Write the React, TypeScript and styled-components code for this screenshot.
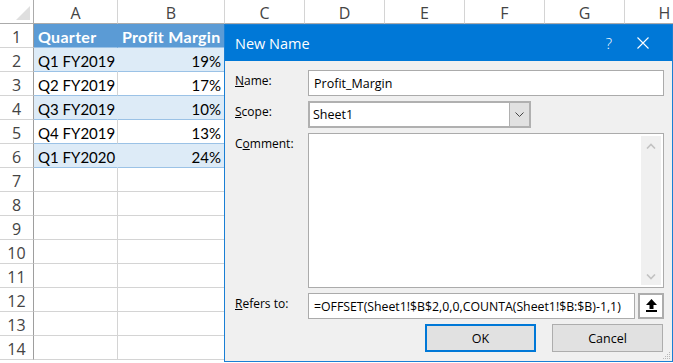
import React from 'react';
import styled, { createGlobalStyle } from 'styled-components';

const GlobalStyle = createGlobalStyle`
    html, body {
        margin: 0;
        padding: 0;
        background: #fff;
    }
    body {
        overflow: hidden;
    }
`;

const Screen = styled.div`
    position: relative;
    width: 673px;
    height: 363px;
    overflow: hidden;
    background: #fff;
`;

// ---- worksheet ----

const Sheet = styled.div`
    display: grid;
    grid-template-columns: 34px 84px 107px repeat(6, 80px);
    grid-auto-rows: 24px;
`;

const Corner = styled.div`
    display: flex;
    align-items: flex-end;
    justify-content: flex-end;
    padding: 0 3px 3px 0;
    box-sizing: border-box;
    border-right: 1px solid #ababab;
    border-bottom: 1px solid #ababab;
`;

const ColHead = styled.div`
    display: flex;
    align-items: center;
    justify-content: center;
    padding-top: 3px;
    box-sizing: border-box;
    border-right: 1px solid #d4d4d4;
    border-bottom: 1px solid #ababab;
    font: 16px 'Open Sans', sans-serif;
    color: #444;
`;

const RowHead = styled.div`
    display: flex;
    align-items: center;
    justify-content: center;
    padding-top: 3px;
    box-sizing: border-box;
    border-right: 1px solid #9e9e9e;
    border-bottom: 1px solid #d4d4d4;
    font: 16px 'Open Sans', sans-serif;
    color: #444;
`;

type Kind = 'head' | 'band' | 'plain' | 'empty';

const fills: Record<Kind, { bg: string; right: string; bottom: string }> = {
    head: { bg: '#5b9bd5', right: '#5b9bd5', bottom: '#9bc2e6' },
    band: { bg: '#ddebf7', right: '#ddebf7', bottom: '#9bc2e6' },
    plain: { bg: '#ffffff', right: '#d4d4d4', bottom: '#9bc2e6' },
    empty: { bg: '#ffffff', right: '#d4d4d4', bottom: '#d4d4d4' },
};

const Cell = styled.div<{ $kind: Kind; $right?: boolean }>`
    display: flex;
    align-items: center;
    justify-content: ${p => (p.$right ? 'flex-end' : 'flex-start')};
    padding: 2px 3px 0 4px;
    box-sizing: border-box;
    overflow: hidden;
    white-space: nowrap;
    background: ${p => fills[p.$kind].bg};
    border-right: 1px solid ${p => fills[p.$kind].right};
    border-bottom: 1px solid ${p => fills[p.$kind].bottom};
    font: ${p => (p.$kind === 'head' ? '700 16px' : '400 15px')} Lato, sans-serif;
    letter-spacing: ${p => (p.$kind === 'head' ? '0.3px' : '0')};
    color: ${p => (p.$kind === 'head' ? '#fff' : '#000')};
`;

// ---- dialog ----

const Dialog = styled.div`
    position: absolute;
    left: 224px;
    top: 24px;
    width: 449px;
    height: 338px;
    box-sizing: border-box;
    display: flex;
    flex-direction: column;
    border: 1px solid #1a7fd4;
    background: #f0f0f0;
    font-family: 'Open Sans', sans-serif;
    color: #000;
`;

const TitleBar = styled.div`
    display: flex;
    align-items: center;
    height: 36px;
    padding: 0 12px 0 10px;
    background: #0078d7;
    color: #fff;
`;

const Title = styled.div`
    flex: 1;
    font-size: 14.5px;
`;

const TitleButton = styled.div`
    display: flex;
    align-items: center;
    justify-content: center;
    width: 34px;
    height: 36px;
    font-size: 15px;
    font-weight: 300;
`;

const Form = styled.div`
    display: grid;
    grid-template-columns: 73px 1fr;
    grid-template-rows: 26px 27px 155px 26px 28px;
    row-gap: 5px;
    padding: 9px 8px 0 10px;
`;

const Label = styled.div`
    padding-top: 3px;
    font-size: 12px;
    line-height: 16px;
`;

const TextBox = styled.div`
    display: flex;
    align-items: center;
    min-width: 0;
    padding: 0 5px;
    box-sizing: border-box;
    border: 1px solid #ababab;
    background: #fff;
    font-size: 12.5px;
    white-space: nowrap;
    overflow: hidden;
`;

const Select = styled.div`
    display: flex;
    width: 223px;
    box-sizing: border-box;
    border: 2px solid #b0b0b0;
    background: #fff;
`;

const SelectValue = styled.div`
    flex: 1;
    display: flex;
    align-items: center;
    padding-left: 3px;
    font-size: 12.5px;
`;

const SelectButton = styled.div`
    display: flex;
    align-items: center;
    justify-content: center;
    width: 19px;
    border-left: 1px solid #b0b0b0;
    background: #e1e1e1;
`;

const CommentBox = styled.div`
    display: flex;
    justify-content: flex-end;
    padding: 2px;
    box-sizing: border-box;
    border: 1px solid #ababab;
    background: #fff;
`;

const ScrollBar = styled.div`
    display: flex;
    flex-direction: column;
    justify-content: space-between;
    align-items: center;
    width: 20px;
    padding: 7px 0 5px;
    box-sizing: border-box;
    background: #f0f0f0;
`;

const RefRow = styled.div`
    display: flex;
    gap: 3px;
`;

const RefText = styled(TextBox)`
    flex: 1;
    font-size: 12.3px;
`;

const CollapseButton = styled.div`
    display: flex;
    align-items: center;
    justify-content: center;
    width: 26px;
    box-sizing: border-box;
    border: 2px solid #adadad;
    background: #fff;
`;

const Buttons = styled.div`
    grid-column: 1 / -1;
    display: flex;
    justify-content: flex-end;
    gap: 16px;
    padding-right: 1px;
`;

const Button = styled.div<{ $default?: boolean }>`
    display: flex;
    align-items: center;
    justify-content: center;
    width: 111px;
    box-sizing: border-box;
    border: ${p => (p.$default ? '2px solid #0078d7' : '1px solid #adadad')};
    background: #e1e1e1;
    font-size: 12.5px;
`;

const Grip = styled.svg`
    position: absolute;
    right: 1px;
    bottom: 1px;
`;

const cols = ['A', 'B', 'C', 'D', 'E', 'F', 'G', 'H'];

const data: [string, string][] = [
    ['Q1 FY2019', '19%'],
    ['Q2 FY2019', '17%'],
    ['Q3 FY2019', '10%'],
    ['Q4 FY2019', '13%'],
    ['Q1 FY2020', '24%'],
];

const Chevron = ({ up, color }: { up?: boolean; color: string }) => (
    <svg width="10" height="6" viewBox="0 0 10 6">
        <path
            d={up ? 'M1 5.5 L5 1.5 L9 5.5' : 'M1 0.5 L5 4.5 L9 0.5'}
            fill="none"
            stroke={color}
            strokeWidth="1.6"
        />
    </svg>
);

export default function App() {
    const rows: React.ReactNode[] = [];
    for (let r = 1; r <= 14; r++) {
        rows.push(<RowHead key={`rh${r}`}>{r}</RowHead>);
        if (r === 1) {
            rows.push(
                <Cell key="h1" $kind="head">Quarter</Cell>,
                <Cell key="h2" $kind="head">Profit Margin</Cell>
            );
        } else if (r <= 6) {
            const [q, m] = data[r - 2];
            const kind: Kind = r % 2 === 0 ? 'band' : 'plain';
            rows.push(
                <Cell key={`a${r}`} $kind={kind}>{q}</Cell>,
                <Cell key={`b${r}`} $kind={kind} $right>{m}</Cell>
            );
        } else {
            rows.push(<Cell key={`a${r}`} $kind="empty" />, <Cell key={`b${r}`} $kind="empty" />);
        }
        for (let c = 2; c < cols.length; c++) {
            rows.push(<Cell key={`x${r}-${c}`} $kind="empty" />);
        }
    }

    return (
        <Screen>
            <GlobalStyle />
            <Sheet>
                <Corner>
                    <svg width="14" height="14" viewBox="0 0 14 14">
                        <path d="M14 0 L14 14 L0 14 Z" fill="#dfdfdf" />
                    </svg>
                </Corner>
                {cols.map(c => (
                    <ColHead key={c}>{c}</ColHead>
                ))}
                {rows}
            </Sheet>

            <Dialog>
                <TitleBar>
                    <Title>New Name</Title>
                    <TitleButton>?</TitleButton>
                    <TitleButton>
                        <svg width="12" height="12" viewBox="0 0 12 12">
                            <path d="M0.5 0.5 L11.5 11.5 M11.5 0.5 L0.5 11.5" stroke="#fff" strokeWidth="1.1" />
                        </svg>
                    </TitleButton>
                </TitleBar>
                <Form>
                    <Label>
                        <u>N</u>ame:
                    </Label>
                    <TextBox>Profit_Margin</TextBox>

                    <Label>
                        <u>S</u>cope:
                    </Label>
                    <Select>
                        <SelectValue>Sheet1</SelectValue>
                        <SelectButton>
                            <svg width="9" height="5" viewBox="0 0 9 5">
                                <path d="M0.5 0.5 L4.5 4.5 L8.5 0.5" fill="none" stroke="#444" strokeWidth="1" />
                            </svg>
                        </SelectButton>
                    </Select>

                    <Label>
                        C<u>o</u>mment:
                    </Label>
                    <CommentBox>
                        <ScrollBar>
                            <Chevron up color="#c2c2c2" />
                            <Chevron color="#c2c2c2" />
                        </ScrollBar>
                    </CommentBox>

                    <Label>
                        <u>R</u>efers to:
                    </Label>
                    <RefRow>
                        <RefText>=OFFSET(Sheet1!$B$2,0,0,COUNTA(Sheet1!$B:$B)-1,1)</RefText>
                        <CollapseButton>
                            <svg width="11" height="14" viewBox="0 0 11 14">
                                <path d="M5.5 0 L11 6 L0 6 Z" fill="#000" />
                                <rect x="3.5" y="5.5" width="4" height="4.5" fill="#000" />
                                <rect x="0" y="11" width="11" height="2" fill="#000" />
                            </svg>
                        </CollapseButton>
                    </RefRow>

                    <Buttons>
                        <Button $default>OK</Button>
                        <Button>Cancel</Button>
                    </Buttons>
                </Form>
                <Grip width="8" height="8" viewBox="0 0 8 8">
                    <g fill="#b8b8b8">
                        <rect x="6" y="0" width="1" height="1" />
                        <rect x="4" y="2" width="1" height="1" />
                        <rect x="6" y="2" width="1" height="1" />
                        <rect x="2" y="4" width="1" height="1" />
                        <rect x="4" y="4" width="1" height="1" />
                        <rect x="6" y="4" width="1" height="1" />
                        <rect x="0" y="6" width="1" height="1" />
                        <rect x="2" y="6" width="1" height="1" />
                        <rect x="4" y="6" width="1" height="1" />
                        <rect x="6" y="6" width="1" height="1" />
                    </g>
                </Grip>
            </Dialog>
        </Screen>
    );
}
